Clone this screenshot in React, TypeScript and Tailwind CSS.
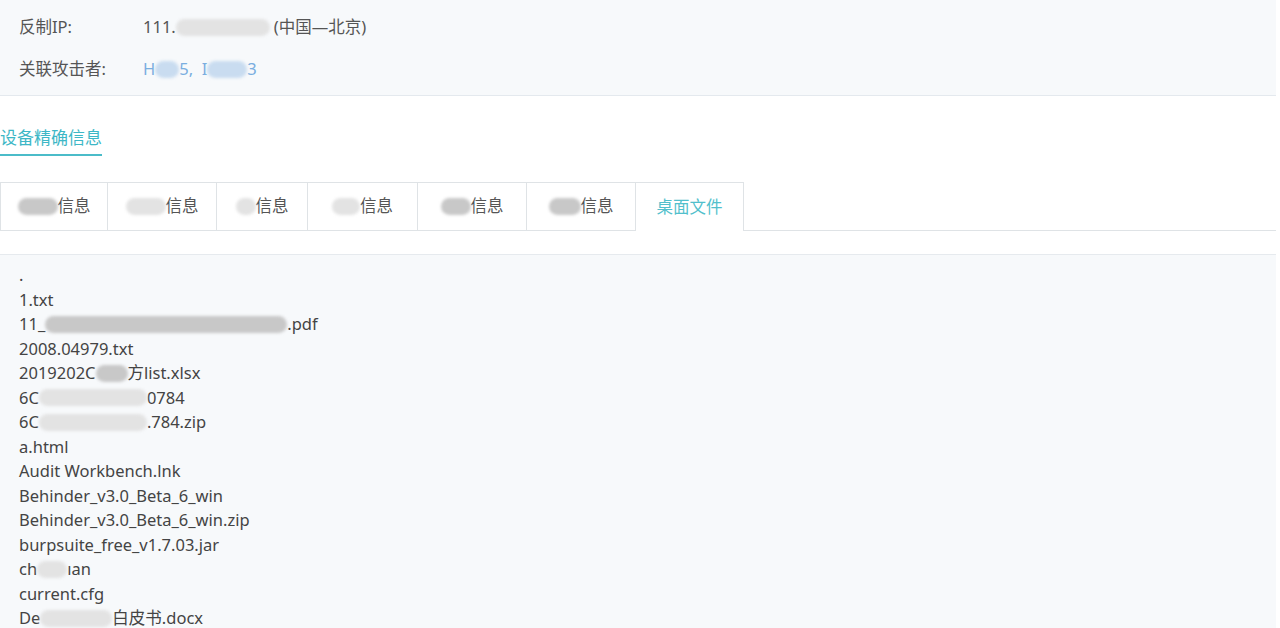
import React from "react";

const font = { fontFamily: '"Noto Sans", "Noto Sans CJK SC", sans-serif' };

function Blur({ w, tone = "gray" }: { w: number; tone?: "gray" | "blue" | "light" }) {
  const cls =
    tone === "blue"
      ? "bg-[#c9dcf0]"
      : tone === "light"
      ? "bg-[#e3e3e3]"
      : "bg-[#c8c8c8]";
  return (
    <span
      className={`inline-block h-[17px] align-middle rounded-full blur-[1.5px] ${cls}`}
      style={{ width: w }}
    />
  );
}

const tabs: { pre: number; tone: "gray" | "light"; w: number }[] = [
  { pre: 40, tone: "gray", w: 108 },
  { pre: 40, tone: "light", w: 109 },
  { pre: 20, tone: "light", w: 91 },
  { pre: 28, tone: "light", w: 110 },
  { pre: 30, tone: "gray", w: 109 },
  { pre: 32, tone: "gray", w: 109 },
];

export default function App() {
  return (
    <div className="w-[1280px] h-[628px] overflow-hidden bg-white text-[#555]" style={font}>
      {/* 基本信息 */}
      <div className="w-[1276px] h-[96px] bg-[#f7f9fb] border-b border-[#e4e9ee] pl-[19px] pt-[14px] text-[16.5px]">
        <div className="flex items-center h-[26px]">
          <span className="w-[124px]">反制IP:</span>
          <span>111.</span>
          <Blur w={94} tone="light" />
          <span className="ml-[4px]">(中国—北京)</span>
        </div>
        <div className="flex items-center h-[26px] mt-[16px]">
          <span className="w-[124px]">关联攻击者:</span>
          <span className="text-[#7aaee0]">H</span>
          <Blur w={24} tone="blue" />
          <span className="text-[#7aaee0]">5,&nbsp;&nbsp;I</span>
          <Blur w={40} tone="blue" />
          <span className="text-[#7aaee0]">3</span>
        </div>
      </div>

      {/* 标题 */}
      <div className="mt-[30px]">
        <span className="inline-block text-[17px] text-[#3db7c6] border-b-2 border-[#4bbcc9] pb-[5px] leading-[23px]">
          设备精确信息
        </span>
      </div>

      {/* 标签页 */}
      <div className="mt-[26px] w-[1276px] flex border-b border-[#dfe3e6] h-[49px]">
        {tabs.map((t, i) => (
          <div
            key={i}
            className="h-[49px] border-t border-r border-b border-[#dfe3e6] first:border-l flex items-center justify-center text-[16.5px] text-[#555] -mb-px bg-white"
            style={{ width: t.w }}
          >
            <Blur w={t.pre} tone={t.tone} />
            <span>信息</span>
          </div>
        ))}
        <div className="h-[49px] w-[108px] border-t border-r border-[#dfe3e6] flex items-center justify-center text-[16.5px] text-[#52bfcc] bg-white -mb-px">
          桌面文件
        </div>
      </div>

      {/* 文件列表 */}
      <div className="mt-[23px] w-[1276px] bg-[#f7f9fb] border-t border-[#e6eaee] pl-[19px] pt-[8px] text-[16.5px] leading-[24.5px] text-[#444]">
        <div>.</div>
        <div>1.txt</div>
        <div className="flex items-center">
          11_<Blur w={242} />.pdf
        </div>
        <div>2008.04979.txt</div>
        <div className="flex items-center">
          2019202C<Blur w={32} />方list.xlsx
        </div>
        <div className="flex items-center">
          6C<Blur w={108} tone="light" />0784
        </div>
        <div className="flex items-center">
          6C<Blur w={108} tone="light" />.784.zip
        </div>
        <div>a.html</div>
        <div>Audit Workbench.lnk</div>
        <div>Behinder_v3.0_Beta_6_win</div>
        <div>Behinder_v3.0_Beta_6_win.zip</div>
        <div>burpsuite_free_v1.7.03.jar</div>
        <div className="flex items-center">
          ch<Blur w={30} tone="light" />ıan
        </div>
        <div>current.cfg</div>
        <div className="flex items-center">
          De<Blur w={72} tone="light" />白皮书.docx
        </div>
      </div>
    </div>
  );
}
